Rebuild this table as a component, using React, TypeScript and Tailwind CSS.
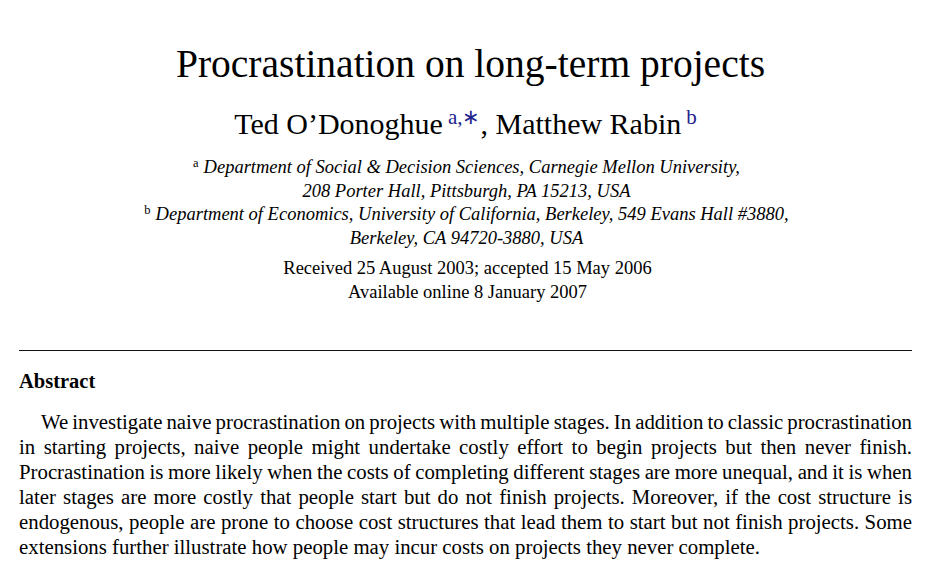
const lines = [
  'We investigate naive procrastination on projects with multiple stages. In addition to classic procrastination',
  'in starting projects, naive people might undertake costly effort to begin projects but then never finish.',
  'Procrastination is more likely when the costs of completing different stages are more unequal, and it is when',
  'later stages are more costly that people start but do not finish projects. Moreover, if the cost structure is',
  'endogenous, people are prone to choose cost structures that lead them to start but not finish projects. Some',
  'extensions further illustrate how people may incur costs on projects they never complete.',
]

export default function App() {
  const serif = { fontFamily: '"Liberation Serif", "Times New Roman", serif' }
  return (
    <div className="w-[941px] h-[567px] bg-white text-black overflow-hidden" style={serif}>
      <div className="pt-[41px] text-center">
        <h1 className="text-[39.5px] leading-[46px]">Procrastination on long-term projects</h1>
        <div className="mt-[19px] pr-[10px] text-[30px] leading-[36px]">
          Ted O’Donoghue<sup className="text-[#23238e] text-[21px] ml-[5px]">a,∗</sup>, Matthew Rabin<sup className="text-[#23238e] text-[21px] ml-[5px]">b</sup>
        </div>
        <div className="mt-[14px] pr-[8px] text-[18.5px] leading-[23.5px] italic">
          <div><sup className="not-italic text-[12.5px] mr-[5px]">a</sup>Department of Social &amp; Decision Sciences, Carnegie Mellon University,</div>
          <div>208 Porter Hall, Pittsburgh, PA 15213, USA</div>
          <div><sup className="not-italic text-[12.5px] mr-[5px]">b</sup>Department of Economics, University of California, Berkeley, 549 Evans Hall #3880,</div>
          <div>Berkeley, CA 94720-3880, USA</div>
        </div>
        <div className="mt-[7px] pr-[6px] text-[18.5px] leading-[23.5px]">
          <div>Received 25 August 2003; accepted 15 May 2006</div>
          <div>Available online 8 January 2007</div>
        </div>
      </div>
      <div className="ml-[19px] mr-[29px] mt-[46px] border-t border-[#111]" />
      <div className="pl-[19px] pr-[29px]">
        <h2 className="mt-[18px] text-[20.5px] font-bold leading-[24px]">Abstract</h2>
        <div className="mt-[16px] text-[20.8px] leading-[25px]">
          {lines.map((line, i) => (
            <div
              key={i}
              className={`whitespace-nowrap ${i === 0 ? 'pl-[22px]' : ''} ${i < lines.length - 1 ? 'text-justify [text-align-last:justify] [word-spacing:-2.5px]' : 'text-left'}`}
            >
              {line}
            </div>
          ))}
        </div>
      </div>
    </div>
  )
}
